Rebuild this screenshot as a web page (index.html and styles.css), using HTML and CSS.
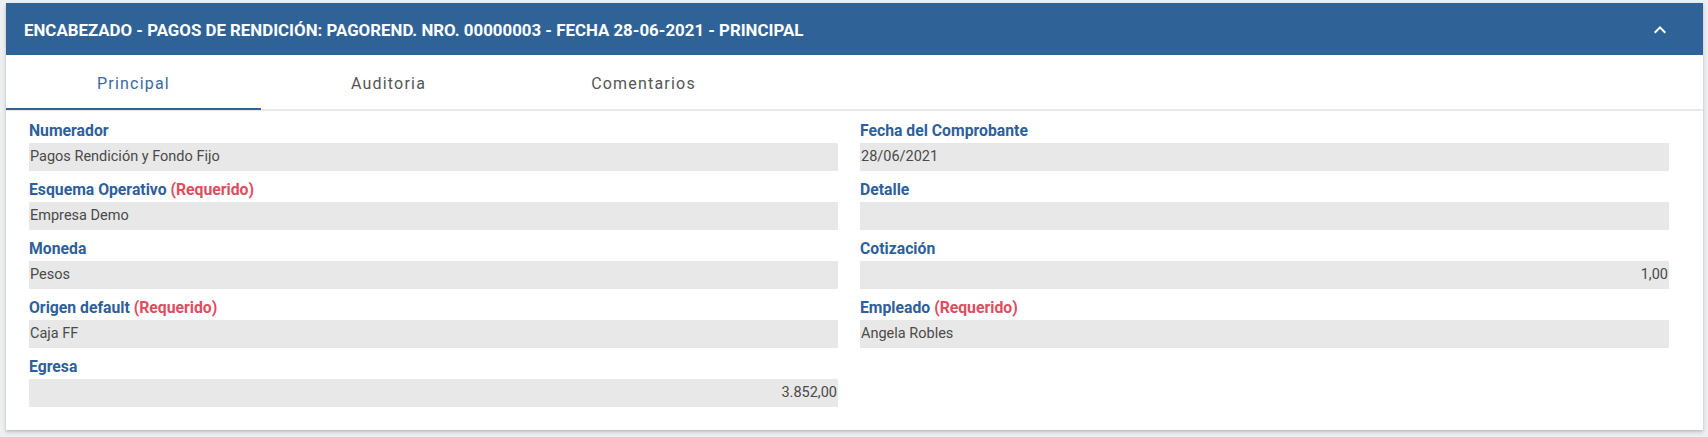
FILE: index.html
```html
<!DOCTYPE html>
<html lang="es">
<head>
<meta charset="utf-8">
<title>Encabezado - Pagos de Rendición</title>
<link rel="stylesheet" href="styles.css">
</head>
<body>
<section class="card">
  <header class="card-header">
    <h1 class="card-title">ENCABEZADO - PAGOS DE RENDICIÓN: PAGOREND. NRO. 00000003 - FECHA 28-06-2021 - PRINCIPAL</h1>
    <span class="collapse-btn">
      <svg viewBox="0 0 24 24" width="24" height="24" aria-hidden="true"><path d="M12 8l-6 6 1.41 1.41L12 10.83l4.59 4.58L18 14z" fill="#fff"/></svg>
    </span>
  </header>
  <nav class="tabs">
    <div class="tab active">Principal</div>
    <div class="tab">Auditoria</div>
    <div class="tab">Comentarios</div>
  </nav>
  <div class="form-grid">
    <div class="field">
      <div class="label">Numerador</div>
      <div class="value">Pagos Rendición y Fondo Fijo</div>
    </div>
    <div class="field">
      <div class="label">Fecha del Comprobante</div>
      <div class="value">28/06/2021</div>
    </div>
    <div class="field">
      <div class="label">Esquema Operativo <span class="req">(Requerido)</span></div>
      <div class="value">Empresa Demo</div>
    </div>
    <div class="field">
      <div class="label">Detalle</div>
      <div class="value"></div>
    </div>
    <div class="field">
      <div class="label">Moneda</div>
      <div class="value">Pesos</div>
    </div>
    <div class="field">
      <div class="label">Cotización</div>
      <div class="value num">1,00</div>
    </div>
    <div class="field">
      <div class="label">Origen default <span class="req">(Requerido)</span></div>
      <div class="value">Caja FF</div>
    </div>
    <div class="field">
      <div class="label">Empleado <span class="req">(Requerido)</span></div>
      <div class="value">Angela Robles</div>
    </div>
    <div class="field">
      <div class="label">Egresa</div>
      <div class="value num">3.852,00</div>
    </div>
  </div>
</section>
</body>
</html>
```
FILE: styles.css
```css
html, body {
  margin: 0;
  padding: 0;
}
body {
  background: #eeeff1;
  font-family: Roboto, "Liberation Sans", Arial, sans-serif;
  padding: 3px 5px 8px 6px;
}
.card {
  background: #fff;
  box-shadow: 0 2px 4px rgba(0, 0, 0, 0.18), 0 1px 2px rgba(0, 0, 0, 0.08);
}
.card-header {
  height: 52px;
  background: #2f6398;
  display: flex;
  align-items: center;
  justify-content: space-between;
  padding: 0 31px 0 18px;
}
.card-title {
  margin: 0;
  color: #fff;
  font-size: 16.85px;
  font-weight: 700;
  line-height: 20px;
  letter-spacing: 0;
  padding-top: 2px;
}
.collapse-btn {
  display: flex;
  width: 24px;
  height: 24px;
  margin-top: 2px;
}
.tabs {
  display: flex;
  height: 54px;
  border-bottom: 2px solid #e9e9e9;
}
.tab {
  position: relative;
  width: 255px;
  display: flex;
  align-items: center;
  justify-content: center;
  font-size: 16px;
  letter-spacing: 1.2px;
  color: #555;
  padding-top: 2px;
}
.tab.active {
  color: #3a68a0;
}
.tab.active::after {
  content: "";
  position: absolute;
  left: 0;
  right: 0;
  bottom: -1px;
  height: 2px;
  background: #2f6398;
}
.form-grid {
  display: grid;
  grid-template-columns: 1fr 1fr;
  column-gap: 22px;
  padding: 1px 34px 23px 23px;
}
.label {
  height: 31px;
  box-sizing: border-box;
  padding-top: 9px;
  font-size: 15.75px;
  line-height: 19px;
  font-weight: 700;
  color: #2e5f9b;
}
.req {
  color: #e04d5e;
  font-weight: 700;
}
.value {
  height: 28px;
  line-height: 28px;
  background: #e8e8e8;
  color: #4a4a4a;
  font-size: 14.5px;
  padding: 0 1px;
}
.value.num {
  text-align: right;
}
```
